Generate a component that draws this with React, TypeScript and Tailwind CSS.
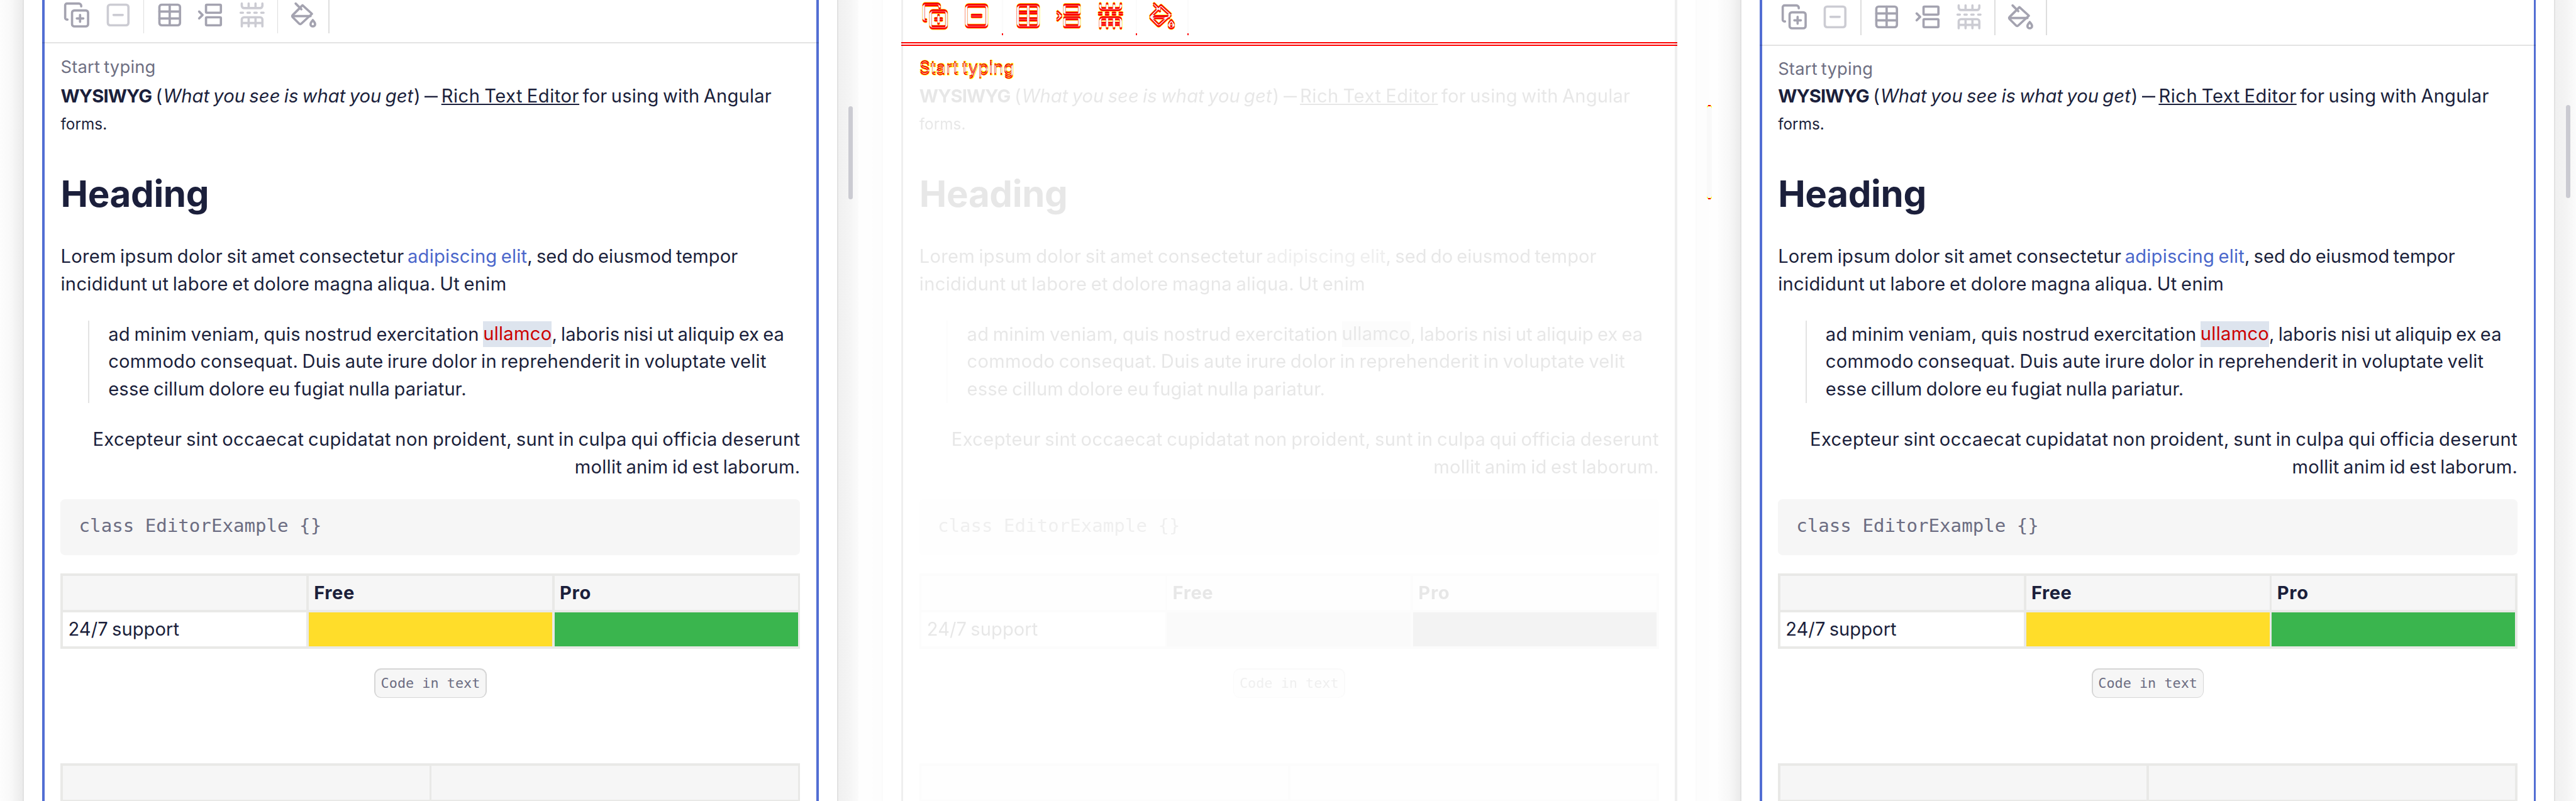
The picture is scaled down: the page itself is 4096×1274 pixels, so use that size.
import React, { useLayoutEffect, useRef } from "react";
import clsx from "clsx";

/** A run of text whose tracking is adjusted so that it fills the box given by its width class. */
function Fit({ className, children }: { className: string; children: string }) {
  const outer = useRef<HTMLSpanElement>(null);
  const inner = useRef<HTMLSpanElement>(null);
  useLayoutEffect(() => {
    const o = outer.current;
    const i = inner.current;
    if (!o || !i) return;
    i.style.letterSpacing = "0px";
    const cssWidth = parseFloat(getComputedStyle(o).width);
    const unit = o.getBoundingClientRect().width / cssWidth;
    const natural = i.getBoundingClientRect().width / unit;
    i.style.letterSpacing = `${(cssWidth - natural) / children.length}px`;
  }, [children]);
  return (
    <span ref={outer} className={clsx("block shrink-0 whitespace-pre", className)}>
      <span ref={inner} className="[word-spacing:-0.07em]">
        {children}
      </span>
    </span>
  );
}

const icons = {
  add: (
    <>
      <path d="M32 9V8a4 4 0 0 0-4-4H7a3 3 0 0 0-3 3v22a3 3 0 0 0 3 3h1" />
      <rect x="16" y="16" width="28" height="28" rx="4" />
      <path d="M30 24v12M24.3 30h11.4" />
    </>
  ),
  remove: (
    <>
      <rect x="6" y="6" width="36" height="36" rx="4" />
      <path d="M16 24h16" />
    </>
  ),
  table: (
    <>
      <rect x="6" y="6" width="36" height="36" rx="4" />
      <path d="M24 6v36M6 18h36M6 30h36" />
    </>
  ),
  insertRow: (
    <>
      <path d="M4 18l6 6-6 6" />
      <rect x="16" y="6" width="26" height="14" rx="1.5" />
      <rect x="16" y="28" width="26" height="14" rx="1.5" />
    </>
  ),
  deleteRow: (
    <>
      <path d="M6 4v4a4 4 0 0 0 4 4h28a4 4 0 0 0 4-4V4M18 4v8M30 4v8" />
      <path d="M4 20h4M16 20h4M28 20h4M40 20h4" />
      <path d="M6 44V32a4 4 0 0 1 4-4h28a4 4 0 0 1 4 4v12M6 38h36M18 28v16M30 28v16" />
    </>
  ),
  fill: (
    <>
      <path d="M22 7l16.500 15L20 39q-2 2-4 0L5 28q-2-2 0-4z" />
      <path d="M4 26h32M10 4l10 10" />
      <path d="M40 33c-2 2.500-4 4.500-4 7a4 4 0 0 0 8 0c0-2.500-2-4.500-4-7z" />
    </>
  ),
};

type Tone = "normal" | "red" | "yellow";

function Icon({ name, tone, disabled }: { name: keyof typeof icons; tone: Tone; disabled?: boolean }) {
  return (
    <svg
      viewBox="0 0 48 48"
      className={clsx("size-6 shrink-0", disabled && tone === "normal" && "opacity-55")}
      fill="none"
      stroke="currentColor"
      strokeWidth={tone === "yellow" ? 5.2 : tone === "red" ? 3.8 : 4}
      strokeLinecap="round"
      strokeLinejoin="round"
    >
      {icons[name]}
    </svg>
  );
}

function Separator({ tone, className }: { tone: Tone; className: string }) {
  return (
    <div
      className={clsx("h-[34px] -mt-[6px] w-px shrink-0", className, tone === "normal" ? "bg-[#dedede]" : "bg-current")}
    />
  );
}

/** The bottom edge of the toolbar and the placeholder line below it. */
function Header({ low, tone }: { low?: boolean; tone: Tone }) {
  return (
    <div className="h-[72px] w-full">
      <div
        className={clsx(
          "flex items-start pl-4",
          low ? "h-[39px] pt-[3px]" : "h-[37px] pt-px",
          tone === "normal" && "text-[#a4a3b0]",
        )}
      >
        <Icon name="add" tone={tone} />
        <div className="w-3" />
        <Icon name="remove" tone={tone} disabled />
        <Separator tone={tone} className="ml-2.5 mr-2.5" />
        <Icon name="table" tone={tone} />
        <div className="w-3" />
        <Icon name="insertRow" tone={tone} />
        <div className="w-3" />
        <Icon name="deleteRow" tone={tone} disabled />
        <Separator tone={tone} className="ml-2.5 mr-2.5" />
        <Icon name="fill" tone={tone} />
        <Separator tone={tone} className="ml-2.5" />
      </div>
      <div
        className={clsx(
          "relative -mx-0.5 h-px",
          tone === "normal" ? "bg-black/11" : tone === "red" ? "bg-current" : "",
        )}
      />
      <div
        className={clsx(
          "mt-[8.5px] flex px-3.5 text-[15px] leading-6",
          tone === "normal" && "text-[#6e6f82]",
          tone === "red" && "font-light",
          tone === "yellow" && "[-webkit-text-stroke:0.8px_currentColor]",
        )}
      >
        <Fit className="w-[83px]">Start typing</Fit>
      </div>
    </div>
  );
}

function Article() {
  return (
    <div className="px-3.5 text-[16px] leading-6 text-[#1b1f3b]">
      <div className="flex">
        <Fit className="w-[79.5px] font-bold">WYSIWYG</Fit>
        <span className="ml-[3.5px] w-[6.500px]">(</span>
        <Fit className="w-[218.500px] italic">What you see is what you get</Fit>
        <span className="ml-[0.5px] w-[9.500px]">)</span>
        <span className="w-[14.500px] origin-left scale-x-[0.72]">—</span>
        <Fit className="w-[120.500px] underline decoration-1 underline-offset-[1px]">Rich Text Editor</Fit>
        <Fit className="ml-[3px] w-[165px]">for using with Angular</Fit>
      </div>
      <div className="flex pt-[0.5px] text-[13.33px] leading-6">
        <Fit className="w-[40.500px]">forms.</Fit>
      </div>
      <h1 className="mt-[29.1px] flex text-[32px] font-bold leading-10">
        <Fit className="w-[129.500px]">Heading</Fit>
      </h1>
      <div className="mt-[22.6px] flex">
        <Fit className="w-[300px]">Lorem ipsum dolor sit amet consectetur</Fit>
        <Fit className="ml-[3px] w-[104.500px] text-[#4a67cb]">adipiscing elit</Fit>
        <Fit className="w-[184px]">, sed do eiusmod tempor</Fit>
      </div>
      <div className="flex">
        <Fit className="w-[389.500px]">incididunt ut labore et dolore magna aliqua. Ut enim</Fit>
      </div>
      <blockquote className="ml-6 mt-[19.8px] flex">
        <div className="w-px bg-[#e3e3e3]" />
        <div className="ml-[16.6px]">
          <div className="flex">
            <Fit className="w-[323.900px]">ad minim veniam, quis nostrud exercitation</Fit>
            <Fit className="ml-[3.5px] mt-px h-[22px] w-[60px] bg-[#dde4ee] leading-[22px] text-[#cc0000]">ullamco</Fit>
            <Fit className="w-[203px]">, laboris nisi ut aliquip ex ea</Fit>
          </div>
          <div className="flex">
            <Fit className="w-[574.900px]">
              commodo consequat. Duis aute irure dolor in reprehenderit in voluptate velit
            </Fit>
          </div>
          <div className="flex">
            <Fit className="w-[312.900px]">esse cillum dolore eu fugiat nulla pariatur.</Fit>
          </div>
        </div>
      </blockquote>
      <div className="mt-5 flex justify-end">
        <Fit className="w-[618px]">
          Excepteur sint occaecat cupidatat non proident, sunt in culpa qui officia deserunt
        </Fit>
      </div>
      <div className="flex justify-end">
        <Fit className="w-[197px]">mollit anim id est laborum.</Fit>
      </div>
      <pre className="mt-4 h-[49px] rounded bg-[#f6f6f6] px-4 pt-[11.5px] font-['DejaVu_Sans_Mono',monospace] text-[16px] leading-6 text-[#6c6d82]">
        class EditorExample {"{}"}
      </pre>
      <div className="mt-4 grid h-[66px] grid-cols-3 grid-rows-2 gap-0.5 bg-[#e9e9e7] p-0.5">
        <div className="bg-[#f6f6f6]" />
        <div className="flex bg-[#f6f6f6] px-[4.6px] pt-[3px] font-bold">
          <Fit className="w-[35.500px]">Free</Fit>
        </div>
        <div className="flex bg-[#f6f6f6] px-[4.6px] pt-[3px] font-bold">
          <Fit className="w-[27.500px]">Pro</Fit>
        </div>
        <div className="flex bg-white px-[4.6px] pt-[3px]">
          <Fit className="w-[97px]">24/7 support</Fit>
        </div>
        <div className="bg-[#ffdd2a]" />
        <div className="bg-[#3ab54e]" />
      </div>
      <div className="mt-[17px] flex justify-center">
        <code className="flex h-[26px] w-[98px] rounded-[6px] bg-[#d6d6d6] p-px">
          <span className="flex-1 rounded-[5px] bg-[#f6f6f6] text-center font-['DejaVu_Sans_Mono',monospace] text-[12px] leading-6 text-[#6c6d82]">
            Code in text
          </span>
        </code>
      </div>
      <div className="mt-[57px] grid h-[34px] grid-cols-2 gap-0.5 bg-[#e9e9e7] p-0.5">
        <div className="bg-[#f6f6f6]" />
        <div className="bg-[#f6f6f6]" />
      </div>
    </div>
  );
}

function Panel({ low }: { low?: boolean }) {
  return (
    <div className="flex h-[700px] w-[750px] shrink-0 overflow-hidden bg-white">
      <div className="w-5 bg-linear-to-r from-[#fdfdfd] via-[#f8f8f8] to-[#ebebeb]" />
      <div className="w-px bg-[#e2e2e2]" />
      <div className="w-4" />
      <div className="w-0.5 bg-[#526ed3]" />
      <div className="w-[674px]">
        <Header tone="normal" low={low} />
        <Article />
      </div>
      <div className="w-0.5 bg-[#526ed3]" />
      <div className="w-4" />
      <div className="w-px bg-[#e2e2e2]" />
      <div className="w-[18px] bg-linear-to-r from-[#f0f0f0] via-[#f4f4f4] to-[#fbfbfb] pl-[9px]">
        <div className={clsx("h-[81px] w-1 rounded-full bg-[#cbcbd2]", low ? "mt-[92px]" : "mt-[93px]")} />
      </div>
    </div>
  );
}

/** One of the two states, drawn so that areas common to both cancel out. */
function Marks({ low, tone }: { low?: boolean; tone: "red" | "yellow" }) {
  return (
    <div
      className={clsx(
        "absolute inset-0 flex overflow-hidden mix-blend-difference",
        tone === "red" ? "text-[#00ffff]" : "text-[#0000ff]",
      )}
    >
      <div className="ml-[39px] w-[674px]">
        <Header tone={tone} low={low} />
      </div>
      <div
        className={clsx(
          "h-[81px] bg-current",
          tone === "red" ? "ml-[29px] w-0.5" : "ml-7 w-1 rounded-full",
          low ? "mt-[92px]" : "mt-[93px]",
        )}
      />
    </div>
  );
}

function DiffPanel() {
  return (
    <div className="relative isolate w-[750px] shrink-0 overflow-hidden bg-white">
      <div className="opacity-10 grayscale">
        <Panel />
      </div>
      <div className="absolute inset-0 isolate bg-white mix-blend-multiply">
        <Marks tone="yellow" />
        <Marks tone="yellow" low />
      </div>
      <div className="absolute inset-0 isolate bg-white mix-blend-multiply">
        <Marks tone="red" />
        <Marks tone="red" low />
      </div>
    </div>
  );
}

export default function App() {
  return (
    <div className="h-[1274px] w-[4096px] overflow-hidden bg-white font-[Inter,sans-serif]">
      <div className="flex h-[700px] w-[2250px] [zoom:1.82045]">
        <Panel />
        <DiffPanel />
        <Panel low />
      </div>
    </div>
  );
}
